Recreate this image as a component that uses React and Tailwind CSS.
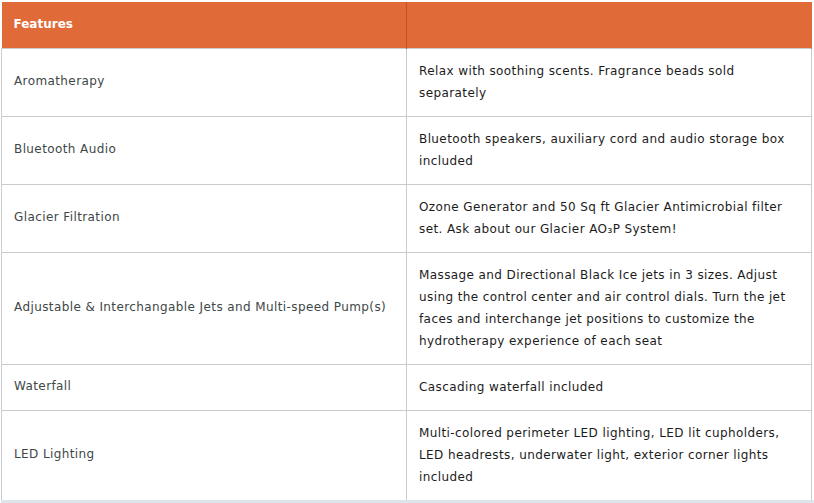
const rows = [
  ['Aromatherapy', 'Relax with soothing scents. Fragrance beads sold separately'],
  ['Bluetooth Audio', 'Bluetooth speakers, auxiliary cord and audio storage box included'],
  ['Glacier Filtration', 'Ozone Generator and 50 Sq ft Glacier Antimicrobial filter set. Ask about our Glacier AO₃P System!'],
  [
    'Adjustable & Interchangable Jets and Multi-speed Pump(s)',
    'Massage and Directional Black Ice jets in 3 sizes. Adjust using the control center and air control dials. Turn the jet faces and interchange jet positions to customize the hydrotherapy experience of each seat',
  ],
  ['Waterfall', 'Cascading waterfall included'],
  ['LED Lighting', 'Multi-colored perimeter LED lighting, LED lit cupholders, LED headrests, underwater light, exterior corner lights included'],
]

const App = () => {
  return (
    <div className="h-[503px] w-[814px] bg-white pt-[2px] pl-[1px] font-['DejaVu_Sans',sans-serif] text-[12px] leading-[22px]">
      <table className="w-[811px] table-fixed border-collapse">
        <thead>
          <tr className="bg-[#e06a38] text-white">
            <th className="w-[405px] border-r border-[#c25328] px-3 pt-[11px] pb-[13px] text-left font-bold">Features</th>
            <th className="px-3 pt-[11px] pb-[13px] border-r border-[#e06a38]"></th>
          </tr>
        </thead>
        <tbody>
          {rows.map(([name, desc]) => (
            <tr key={name}>
              <td className="border border-[#c9ccce] px-3 pt-[10px] pb-[13px] align-middle tracking-[0.4px] text-[#3e4747]">{name}</td>
              <td className="border border-[#c9ccce] px-3 pt-[11px] pb-[12px] align-middle tracking-[0.4px] text-[#1c1c1c]">{desc}</td>
            </tr>
          ))}
        </tbody>
      </table>
      <div className="mt-[-1px] h-[4px] bg-[#dde5eb]" />
    </div>
  )
}

export default App
